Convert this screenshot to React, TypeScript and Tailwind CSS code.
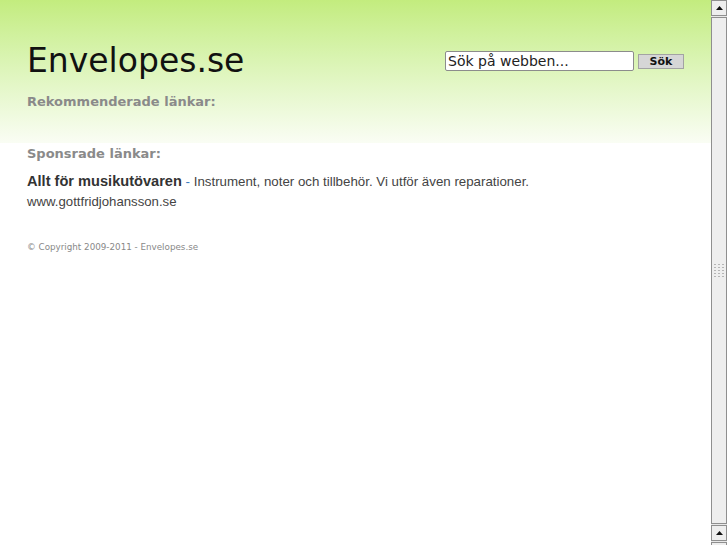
import React from "react";

function Scrollbar() {
  return (
    <div className="fixed right-0 top-0 flex h-[545px] w-[16px] flex-col bg-[#e8e8e8]">
      <div className="flex h-[16px] items-center justify-center border border-[#8f8f8f] bg-[#eeeeee]">
        <svg width="7" height="4" viewBox="0 0 7 4"><path d="M0 4 L3.5 0 L7 4 Z" fill="#111" /></svg>
      </div>
      <div className="mt-px flex flex-1 items-center justify-center border border-[#8f8f8f] bg-[#eeeeee]">
        <svg width="10" height="14" viewBox="0 0 10 14">
          {[0, 1, 2, 3, 4].map((r) =>
            [0, 1, 2].map((c) => (
              <rect key={r + "-" + c} x={c * 4} y={r * 3} width="2" height="1" fill="#b5b5b5" />
            ))
          )}
        </svg>
      </div>
      <div className="mt-px flex h-[16px] items-center justify-center border border-[#8f8f8f] bg-[#eeeeee]">
        <svg width="7" height="4" viewBox="0 0 7 4"><path d="M0 4 L3.5 0 L7 4 Z" fill="#111" /></svg>
      </div>
      <div className="mt-px h-[3px] border border-b-0 border-[#8f8f8f] bg-[#eeeeee]" />
    </div>
  );
}

export default function App() {
  const dejavu = { fontFamily: '"DejaVu Sans", sans-serif' };
  const lib = { fontFamily: '"Liberation Sans", Arial, sans-serif' };
  return (
    <div className="relative min-h-[545px] w-[727px] bg-white" style={dejavu}>
      <div className="h-[143px] w-[711px] bg-gradient-to-b from-[#c3ec7e] to-[#fafdf4] px-[27px]">
        <div className="flex items-start justify-between pt-[41px]">
          <h1 className="text-[33px] leading-[40px] text-[#111]">Envelopes.se</h1>
          <div className="mt-[10px] flex items-center gap-[4px]">
            <div className="flex h-[20px] w-[189px] items-center rounded-[2px] border border-[#8c8c8c] bg-white px-[2px] text-[14px] text-[#222]">
              Sök på webben...
            </div>
            <button className="h-[15px] w-[46px] border border-[#a3a3a3] bg-[#d6d6d6] text-[11px] font-bold leading-[13px] text-[#111]">
              Sök
            </button>
          </div>
        </div>
        <div className="mt-[13px] text-[13px] font-bold leading-[16px] text-[#8a8a8a]">Rekommenderade länkar:</div>
      </div>
      <div className="w-[711px] px-[27px]">
        <div className="mt-[3px] text-[13px] font-bold leading-[16px] text-[#8a8a8a]">Sponsrade länkar:</div>
        <div className="mt-[9px] leading-[20px]" style={lib}>
          <span className="text-[14.6px] font-bold text-[#333]">Allt för musikutövaren</span>
          <span className="text-[13.3px] text-[#3d7cc0]"> - </span>
          <span className="text-[13.3px] text-[#444]">Instrument, noter och tillbehör. Vi utför även reparationer.</span>
        </div>
        <div className="text-[13.2px] leading-[20px] text-[#444]" style={lib}>
          www.gottfridjohansson.se
        </div>
        <div className="mt-[29px] text-[8.75px] leading-[12px] text-[#888]">© Copyright 2009-2011 - Envelopes.se</div>
      </div>
      <Scrollbar />
    </div>
  );
}
